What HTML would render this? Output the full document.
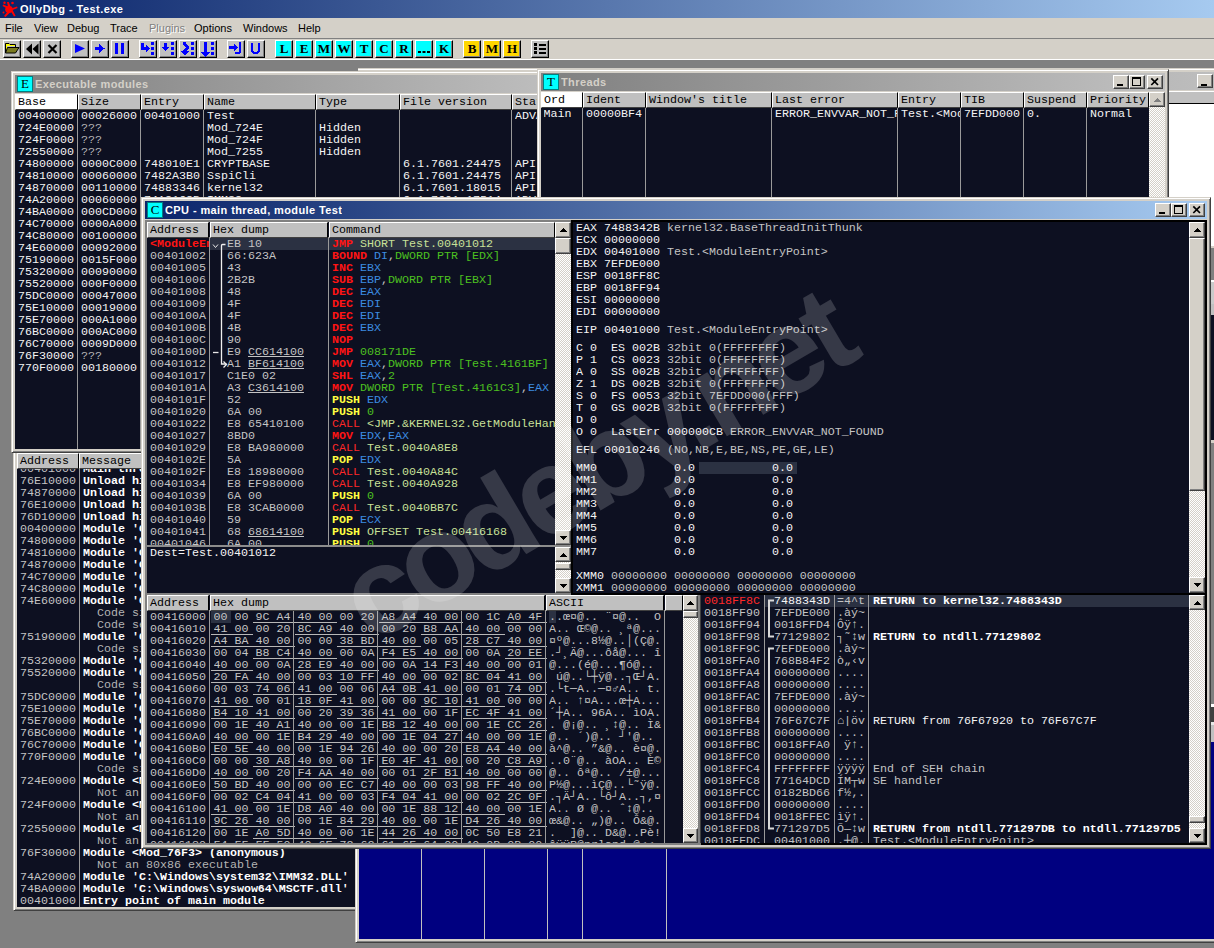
<!DOCTYPE html>
<html lang="en"><head><meta charset="utf-8"><title>OllyDbg - Test.exe</title>
<style>
html,body{margin:0;padding:0}
body{width:1214px;height:948px;overflow:hidden;background:#808080;position:relative;font-family:"Liberation Sans",sans-serif;font-size:11px}
div,pre,span,svg{position:absolute;box-sizing:border-box;margin:0;padding:0}
span.i,pre span{position:static}
pre,.m{font:11.67px/12px "Liberation Mono",monospace;white-space:pre;color:#c4c4c4;overflow:hidden}
.win{background:#d4d0c8;border:1px solid;border-color:#d4d0c8 #404040 #404040 #d4d0c8;box-shadow:inset 1px 1px 0 #fff,inset -1px -1px 0 #808080;overflow:hidden}
.cap{height:18px;color:#fff;font:bold 11px/18px "Liberation Sans",sans-serif;letter-spacing:.4px;white-space:nowrap;overflow:hidden}
.cap.on{background:linear-gradient(90deg,#0a246a,#a6caf0)}
.cap.off{background:linear-gradient(90deg,#808080,#c0c0c0);color:#d4d0c8}
.ico{width:16px;height:16px;background:#00ffff;border:1px solid #008080;color:#000;font:13px/14px "Liberation Serif",serif;text-align:center;letter-spacing:0}
.btn{background:#d4d0c8;border:1px solid;border-color:#fff #404040 #404040 #fff;box-shadow:inset -1px -1px 0 #808080,inset 1px 1px 0 #d4d0c8}
.hd{background:#c0c0c0;color:#000;height:16px;border-top:1px solid #fff;border-left:1px solid #fff;border-bottom:1px solid #404040;border-right:1px solid #000;font:11.67px/15px "Liberation Mono",monospace;white-space:pre;overflow:hidden;padding-left:2px}
.hd.hw{background:#fff}
.dk{background:#0d1021;overflow:hidden}
.vl{width:1px;background:#9a9a9a}
.trk{background-color:#e9e7e3;background-image:conic-gradient(#fff 25%,#d4d0c8 0 50%,#fff 0 75%,#d4d0c8 0);background-size:2px 2px}
.r{color:#ff1414;font-weight:bold}
.c{color:#ff2828}
.y{color:#ffff40;font-weight:bold}
.b{color:#3c8ce0}
.g{color:#4cc020}
.p{color:#c8e098}
.w{color:#f4f4f4}
.W{color:#fff;font-weight:bold}
.d{color:#b4b4b4}
.u{text-decoration:underline}
.menu span{position:absolute;top:0;line-height:20px;font-size:11px;color:#000}
</style></head>
<body>
<div class="win" style="left:13px;top:430px;width:500px;height:481px;"><div class="dk" style="left:3px;top:23px;width:480px;height:453px;"><pre style="left:3px;top:9px;width:60px;height:444px;">00401000
76E10000
74870000
76E10000
76D10000
00400000
74800000
74810000
74870000
74C70000
74C80000
74E60000


75190000

75320000
75520000

75DC0000
75E10000
75E70000
76BC0000
76C70000
770F0000

724E0000

724F0000

72550000

76F30000

74A20000
74BA0000
00401000</pre>
<pre style="left:66px;top:9px;width:420px;height:444px;"><span class="W">Main thread with ID 00000BF4 created</span>
<span class="W">Unload hidden module 76E10000</span>
<span class="W">Unload hidden module 74870000</span>
<span class="W">Unload hidden module 76E10000</span>
<span class="W">Unload hidden module 76D10000</span>
<span class="W">Module 'C:\Users\Test\Desktop\Test.exe'</span>
<span class="W">Module 'C:\Windows\syswow64\CRYPTBASE.dll'</span>
<span class="W">Module 'C:\Windows\syswow64\SspiCli.dll'</span>
<span class="W">Module 'C:\Windows\syswow64\kernel32.dll'</span>
<span class="W">Module 'C:\Windows\syswow64\LPK.dll'</span>
<span class="W">Module 'C:\Windows\syswow64\USER32.dll'</span>
<span class="W">Module 'C:\Windows\syswow64\OLEAUT32.dll'</span>
<span class="d">  Code size in header is 00080000, extending to size of section</span>
<span class="d">  Code section extended to include self-extractor</span>
<span class="W">Module 'C:\Windows\syswow64\ole32.dll'</span>
<span class="d">  Code size in header is 000F0000, extending to size of section</span>
<span class="W">Module 'C:\Windows\syswow64\GDI32.dll'</span>
<span class="W">Module 'C:\Windows\syswow64\RPCRT4.dll'</span>
<span class="d">  Code size in header is 000E0000, extending to size of section</span>
<span class="W">Module 'C:\Windows\syswow64\KERNELBASE.dll'</span>
<span class="W">Module 'C:\Windows\syswow64\sechost.dll'</span>
<span class="W">Module 'C:\Windows\syswow64\SHLWAPI.dll'</span>
<span class="W">Module 'C:\Windows\syswow64\msvcrt.dll'</span>
<span class="W">Module 'C:\Windows\syswow64\ADVAPI32.dll'</span>
<span class="W">Module 'C:\Windows\SysWOW64\ntdll.dll'</span>
<span class="d">  Code size in header is 00178000, extending to size of section</span>
<span class="W">Module &lt;Mod_724E&gt; (anonymous)</span>
<span class="d">  Not an 80x86 executable</span>
<span class="W">Module &lt;Mod_724F&gt; (anonymous)</span>
<span class="d">  Not an 80x86 executable</span>
<span class="W">Module &lt;Mod_7255&gt; (anonymous)</span>
<span class="d">  Not an 80x86 executable</span>
<span class="W">Module &lt;Mod_76F3&gt; (anonymous)</span>
<span class="d">  Not an 80x86 executable</span>
<span class="W">Module 'C:\Windows\system32\IMM32.DLL'</span>
<span class="W">Module 'C:\Windows\syswow64\MSCTF.dll'</span>
<span class="W">Entry point of main module</span></pre>
<div class="vl" style="left:62px;top:0px;width:1px;height:453px;"></div>
</div>
<div class="hd" style="left:3px;top:22px;width:62px;height:16px;">Address</div>
<div class="hd" style="left:65px;top:22px;width:420px;height:16px;">Message</div>
</div>
<div class="win" style="left:355px;top:68px;width:900px;height:875px;"><div class="cap off" style="left:3px;top:3px;width:892px;height:18px;"></div>
<div class="btn" style="left:841px;top:5px;width:16px;height:14px;"><svg width="14" height="12" style="left:0;top:0"><path d="M3 9h6v2H3z" fill="#000"/></svg></div>
<div style="left:3px;top:22px;width:892px;height:12px;background:#c0c0c0;border-top:1px solid #fff"></div>
<div style="left:3px;top:34px;width:892px;height:1px;background:#000"></div>
<div style="left:3px;top:35px;width:892px;height:142px;background:#fff"></div>
<div style="left:3px;top:177px;width:892px;height:2px;background:#d4d0c8"></div>
<div style="left:3px;top:179px;width:892px;height:32px;background:#808080"></div>
<div style="left:3px;top:211px;width:892px;height:2px;background:#fff"></div>
<div style="left:3px;top:213px;width:892px;height:22px;background:#cacaca"></div>
<div style="left:3px;top:235px;width:892px;height:11px;background:#c0c0c0"></div>
<div style="left:3px;top:246px;width:892px;height:125px;background:#0d1021"></div>
<div style="left:3px;top:371px;width:892px;height:3px;background:#d4d0c8"></div>
<div style="left:3px;top:374px;width:892px;height:261px;background:#808080"></div>
<div style="left:3px;top:635px;width:892px;height:3px;background:#fff"></div>
<div style="left:3px;top:638px;width:892px;height:15px;background:#404040"></div>
<div style="left:3px;top:653px;width:892px;height:3px;background:#e8e8e8"></div>
<div style="left:3px;top:656px;width:892px;height:17px;background:#c0c0c0"></div>
<div style="left:3px;top:673px;width:892px;height:197px;background:#000080"></div>
<div class="vl" style="left:65px;top:780px;width:1px;height:90px;background:#c0c0c0"></div>
<div class="vl" style="left:128px;top:780px;width:1px;height:90px;background:#c0c0c0"></div>
<div class="vl" style="left:191px;top:780px;width:1px;height:90px;background:#c0c0c0"></div>
<div class="vl" style="left:226px;top:780px;width:1px;height:90px;background:#c0c0c0"></div>
<div class="vl" style="left:310px;top:780px;width:1px;height:90px;background:#c0c0c0"></div>
</div>
<div style="left:355px;top:68px;width:3px;height:3px;background:#808080"></div>
<div class="win" style="left:11px;top:71px;width:560px;height:382px;"><div class="cap off" style="left:3px;top:3px;width:552px;height:18px;"></div>
<div class="ico" style="left:5px;top:4px;width:16px;height:16px;">E</div>
<div class="cap" style="left:23px;top:3px;height:18px;background:none;color:#d4d0c8;">Executable modules</div>
<div class="dk" style="left:3px;top:22px;width:552px;height:355px;"><pre style="left:3px;top:16px;width:59px;height:264px;"><span class="w">00400000</span>
<span class="w">724E0000</span>
<span class="w">724F0000</span>
<span class="w">72550000</span>
<span class="w">74800000</span>
<span class="w">74810000</span>
<span class="w">74870000</span>
<span class="w">74A20000</span>
<span class="w">74BA0000</span>
<span class="w">74C70000</span>
<span class="w">74C80000</span>
<span class="w">74E60000</span>
<span class="w">75190000</span>
<span class="w">75320000</span>
<span class="w">75520000</span>
<span class="w">75DC0000</span>
<span class="w">75E10000</span>
<span class="w">75E70000</span>
<span class="w">76BC0000</span>
<span class="w">76C70000</span>
<span class="w">76F30000</span>
<span class="w">770F0000</span></pre>
<pre style="left:66px;top:16px;width:59px;height:264px;"><span class="w">00026000</span>
<span class="d">???</span>
<span class="d">???</span>
<span class="d">???</span>
<span class="w">0000C000</span>
<span class="w">00060000</span>
<span class="w">00110000</span>
<span class="w">00060000</span>
<span class="w">000CD000</span>
<span class="w">0000A000</span>
<span class="w">00100000</span>
<span class="w">00092000</span>
<span class="w">0015F000</span>
<span class="w">00090000</span>
<span class="w">000F0000</span>
<span class="w">00047000</span>
<span class="w">00019000</span>
<span class="w">000A1000</span>
<span class="w">000AC000</span>
<span class="w">0009D000</span>
<span class="d">???</span>
<span class="w">00180000</span></pre>
<div class="vl" style="left:62px;top:15px;width:1px;height:340px;"></div>
<pre style="left:129px;top:16px;width:59px;height:264px;"><span class="w">00401000</span>
<span class="w"></span>
<span class="w"></span>
<span class="w"></span>
<span class="w">748010E1</span>
<span class="w">7482A3B0</span>
<span class="w">74883346</span>
<span class="w">74A2168B</span>
<span class="w"></span>
<span class="w"></span>
<span class="w"></span>
<span class="w"></span>
<span class="w"></span>
<span class="w"></span>
<span class="w"></span>
<span class="w"></span>
<span class="w"></span>
<span class="w"></span>
<span class="w"></span>
<span class="w"></span>
<span class="w"></span>
<span class="w"></span></pre>
<div class="vl" style="left:125px;top:15px;width:1px;height:340px;"></div>
<pre style="left:192px;top:16px;width:108px;height:264px;"><span class="w">Test</span>
<span class="w">Mod_724E</span>
<span class="w">Mod_724F</span>
<span class="w">Mod_7255</span>
<span class="w">CRYPTBASE</span>
<span class="w">SspiCli</span>
<span class="w">kernel32</span>
<span class="w">IMM32</span>
<span class="w"></span>
<span class="w"></span>
<span class="w"></span>
<span class="w"></span>
<span class="w"></span>
<span class="w"></span>
<span class="w"></span>
<span class="w"></span>
<span class="w"></span>
<span class="w"></span>
<span class="w"></span>
<span class="w"></span>
<span class="w"></span>
<span class="w"></span></pre>
<div class="vl" style="left:188px;top:15px;width:1px;height:340px;"></div>
<pre style="left:304px;top:16px;width:80px;height:264px;"><span class="w"></span>
<span class="w">Hidden</span>
<span class="w">Hidden</span>
<span class="w">Hidden</span>
<span class="w"></span>
<span class="w"></span>
<span class="w"></span>
<span class="w"></span>
<span class="w"></span>
<span class="w"></span>
<span class="w"></span>
<span class="w"></span>
<span class="w"></span>
<span class="w"></span>
<span class="w"></span>
<span class="w"></span>
<span class="w"></span>
<span class="w"></span>
<span class="w"></span>
<span class="w"></span>
<span class="w"></span>
<span class="w"></span></pre>
<div class="vl" style="left:300px;top:15px;width:1px;height:340px;"></div>
<pre style="left:388px;top:16px;width:108px;height:264px;"><span class="w"></span>
<span class="w"></span>
<span class="w"></span>
<span class="w"></span>
<span class="w">6.1.7601.24475</span>
<span class="w">6.1.7601.24475</span>
<span class="w">6.1.7601.18015</span>
<span class="w">6.1.7601.17514</span>
<span class="w"></span>
<span class="w"></span>
<span class="w"></span>
<span class="w"></span>
<span class="w"></span>
<span class="w"></span>
<span class="w"></span>
<span class="w"></span>
<span class="w"></span>
<span class="w"></span>
<span class="w"></span>
<span class="w"></span>
<span class="w"></span>
<span class="w"></span></pre>
<div class="vl" style="left:384px;top:15px;width:1px;height:340px;"></div>
<pre style="left:500px;top:16px;width:76px;height:264px;"><span class="w">ADVAPI32</span>
<span class="w"></span>
<span class="w"></span>
<span class="w"></span>
<span class="w">API-MS-Win</span>
<span class="w">API-MS-Win</span>
<span class="w">API-MS-Win</span>
<span class="w">ADVAPI32</span>
<span class="w"></span>
<span class="w"></span>
<span class="w"></span>
<span class="w"></span>
<span class="w"></span>
<span class="w"></span>
<span class="w"></span>
<span class="w"></span>
<span class="w"></span>
<span class="w"></span>
<span class="w"></span>
<span class="w"></span>
<span class="w"></span>
<span class="w"></span></pre>
<div class="vl" style="left:496px;top:15px;width:1px;height:340px;"></div>
</div>
<div class="hd hw" style="left:3px;top:22px;width:63px;height:16px;">Base</div>
<div class="hd" style="left:66px;top:22px;width:63px;height:16px;">Size</div>
<div class="hd" style="left:129px;top:22px;width:63px;height:16px;">Entry</div>
<div class="hd" style="left:192px;top:22px;width:112px;height:16px;">Name</div>
<div class="hd" style="left:304px;top:22px;width:84px;height:16px;">Type</div>
<div class="hd" style="left:388px;top:22px;width:112px;height:16px;">File version</div>
<div class="hd" style="left:500px;top:22px;width:80px;height:16px;">Static links</div>
</div>
<div class="win" style="left:537px;top:69px;width:632px;height:140px;"><div class="cap off" style="left:3px;top:3px;width:624px;height:18px;"></div>
<div class="ico" style="left:5px;top:4px;width:16px;height:16px;">T</div>
<div class="cap" style="left:23px;top:3px;height:18px;background:none;color:#d4d0c8;">Threads</div>
<div class="btn" style="left:575px;top:5px;width:16px;height:14px;"><svg width="14" height="12" style="left:0;top:0"><path shape-rendering="crispEdges" d="M3 8h6v2H3z" fill="#000"/></svg></div>
<div class="btn" style="left:591px;top:5px;width:16px;height:14px;"><svg width="14" height="12" style="left:0;top:0"><path shape-rendering="crispEdges" d="M2 1h9v9h-9z M3 3v6h7V3z" fill="#000" fill-rule="evenodd"/></svg></div>
<div class="btn" style="left:609px;top:5px;width:16px;height:14px;"><svg width="14" height="12" style="left:0;top:0"><path d="M3.300 2.300l6.700 6.700M10 2.300l-6.700 6.700" stroke="#000" stroke-width="1.700" fill="none"/></svg></div>
<div class="dk" style="left:3px;top:22px;width:624px;height:115px;"><pre style="left:2.5px;top:16px;width:38px;height:12px;"><span class="w">Main</span></pre>
<pre style="left:45px;top:16px;width:59px;height:12px;"><span class="w">00000BF4</span></pre>
<div class="vl" style="left:41px;top:15px;width:1px;height:100px;"></div>
<pre style="left:108px;top:16px;width:122px;height:12px;"><span class="w"></span></pre>
<div class="vl" style="left:104px;top:15px;width:1px;height:100px;"></div>
<pre style="left:234px;top:16px;width:122px;height:12px;"><span class="w">ERROR_ENVVAR_NOT_FOUND</span></pre>
<div class="vl" style="left:230px;top:15px;width:1px;height:100px;"></div>
<pre style="left:360px;top:16px;width:59px;height:12px;"><span class="w">Test.&lt;ModuleEntryPoint&gt;</span></pre>
<div class="vl" style="left:356px;top:15px;width:1px;height:100px;"></div>
<pre style="left:423px;top:16px;width:59px;height:12px;"><span class="w">7EFDD000</span></pre>
<div class="vl" style="left:419px;top:15px;width:1px;height:100px;"></div>
<pre style="left:486px;top:16px;width:59px;height:12px;"><span class="w">0.</span></pre>
<div class="vl" style="left:482px;top:15px;width:1px;height:100px;"></div>
<pre style="left:549px;top:16px;width:58px;height:12px;"><span class="w">Normal</span></pre>
<div class="vl" style="left:545px;top:15px;width:1px;height:100px;"></div>
</div>
<div class="hd hw" style="left:3px;top:22px;width:42px;height:16px;">Ord</div>
<div class="hd" style="left:45px;top:22px;width:63px;height:16px;">Ident</div>
<div class="hd" style="left:108px;top:22px;width:126px;height:16px;">Window's title</div>
<div class="hd" style="left:234px;top:22px;width:126px;height:16px;">Last error</div>
<div class="hd" style="left:360px;top:22px;width:63px;height:16px;">Entry</div>
<div class="hd" style="left:423px;top:22px;width:63px;height:16px;">TIB</div>
<div class="hd" style="left:486px;top:22px;width:63px;height:16px;">Suspend</div>
<div class="hd" style="left:549px;top:22px;width:62px;height:16px;">Priority</div>
<div class="trk" style="left:611px;top:22px;width:16px;height:110px;"></div>
<div class="btn" style="left:611px;top:22px;width:16px;height:15px;"><svg width="14" height="13" style="left:0;top:0"><path shape-rendering="crispEdges" d="M7 5h1v1h-1zM6 6h3v1h-3zM5 7h5v1h-5zM4 8h7v1h-7z" fill="#808080"/></svg></div>
</div>
<div class="win" style="left:141px;top:197px;width:1070px;height:652px;"><div class="cap on" style="left:3px;top:3px;width:1062px;height:18px;"></div>
<div class="ico" style="left:5px;top:4px;width:16px;height:16px;">C</div>
<div class="cap" style="left:23px;top:3px;height:18px;background:none;">CPU - main thread, module Test</div>
<div class="btn" style="left:1013px;top:5px;width:16px;height:14px;"><svg width="14" height="12" style="left:0;top:0"><path shape-rendering="crispEdges" d="M3 8h6v2H3z" fill="#000"/></svg></div>
<div class="btn" style="left:1029px;top:5px;width:16px;height:14px;"><svg width="14" height="12" style="left:0;top:0"><path shape-rendering="crispEdges" d="M2 1h9v9h-9z M3 3v6h7V3z" fill="#000" fill-rule="evenodd"/></svg></div>
<div class="btn" style="left:1047px;top:5px;width:16px;height:14px;"><svg width="14" height="12" style="left:0;top:0"><path d="M3.300 2.300l6.700 6.700M10 2.300l-6.700 6.700" stroke="#000" stroke-width="1.700" fill="none"/></svg></div>
<div style="left:3px;top:22px;width:1062px;height:625px;background:#000"></div>
<div style="left:3px;top:22px;width:426px;height:375px;background:#808080"></div>
<div style="left:3px;top:395px;width:556px;height:252px;background:#808080"></div>
<div class="dk" style="left:5px;top:24px;width:1058px;height:621px;"><div class="dk" style="left:0px;top:0px;width:408px;height:323px;"><div style="left:63px;top:16px;width:345px;height:12px;background:#2b3142"></div>
<pre style="left:3px;top:16px;width:59px;height:312px;"><span class="r">&lt;ModuleEntryPoint&gt;</span>
00401002
00401005
00401006
00401008
00401009
0040100A
0040100B
0040100C
0040100D
00401012
00401017
0040101A
0040101F
00401020
00401022
00401027
00401029
0040102E
0040102F
00401034
00401039
0040103B
00401040
00401041
00401046</pre>
<pre style="left:80px;top:16px;width:101px;height:312px;">EB 10
66:623A
43
2B2B
48
4F
4F
4B
90
E9 <span class="u">CC614100</span>
A1 <span class="u">BF614100</span>
C1E0 02
A3 <span class="u">C3614100</span>
52
6A 00
E8 65410100
8BD0
E8 BA980000
5A
E8 18980000
E8 EF980000
6A 00
E8 3CAB0000
59
68 <span class="u">68614100</span>
6A 00</pre>
<pre style="left:185px;top:16px;width:223px;height:312px;"><span class="r">JMP</span><span class="p"> SHORT Test.00401012</span>
<span class="r">BOUND</span><span class="b"> DI</span>,<span class="g">DWORD PTR [EDX]</span>
<span class="r">INC</span><span class="b"> EBX</span>
<span class="r">SUB</span><span class="b"> EBP</span>,<span class="g">DWORD PTR [EBX]</span>
<span class="r">DEC</span><span class="b"> EAX</span>
<span class="r">DEC</span><span class="b"> EDI</span>
<span class="r">DEC</span><span class="b"> EDI</span>
<span class="r">DEC</span><span class="b"> EBX</span>
<span class="r">NOP</span>
<span class="r">JMP</span><span class="g"> 008171DE</span>
<span class="r">MOV</span><span class="b"> EAX</span>,<span class="g">DWORD PTR [Test.4161BF]</span>
<span class="r">SHL</span><span class="b"> EAX</span>,<span class="g">2</span>
<span class="r">MOV</span><span class="g"> DWORD PTR [Test.4161C3]</span>,<span class="b">EAX</span>
<span class="y">PUSH</span><span class="b"> EDX</span>
<span class="y">PUSH</span><span class="g"> 0</span>
<span class="c">CALL</span><span class="p"> &lt;JMP.&amp;KERNEL32.GetModuleHandleA&gt;</span>
<span class="r">MOV</span><span class="b"> EDX</span>,<span class="b">EAX</span>
<span class="c">CALL</span><span class="p"> Test.0040A8E8</span>
<span class="y">POP</span><span class="b"> EDX</span>
<span class="c">CALL</span><span class="p"> Test.0040A84C</span>
<span class="c">CALL</span><span class="p"> Test.0040A928</span>
<span class="y">PUSH</span><span class="g"> 0</span>
<span class="c">CALL</span><span class="p"> Test.0040BB7C</span>
<span class="y">POP</span><span class="b"> ECX</span>
<span class="y">PUSH</span><span class="p"> OFFSET Test.00416168</span>
<span class="y">PUSH</span><span class="g"> 0</span></pre>
<div class="vl" style="left:62px;top:15px;width:1px;height:310px;"></div>
<div class="vl" style="left:181px;top:15px;width:1px;height:310px;"></div>
<div style="left:64px;top:16px;width:20px;height:140px;"><svg width="20" height="140" style="left:0;top:0"><path d="M2 6.500l2.500 3l2.500 -3" stroke="#e8e8e8" fill="none"/><path d="M14.500 6.500h-3a1 1 0 0 0 -1 1v118.500h5" stroke="#f0f0f0" stroke-width="1.300" fill="none"/><path d="M12.500 123.500l3 3l-3 3" stroke="#f0f0f0" stroke-width="1.300" fill="none"/><path d="M2 114.500h5.500" stroke="#e8e8e8" stroke-width="1.300"/></svg></div>
</div>
<div class="hd" style="left:0px;top:0px;width:62px;height:16px;">Address</div>
<div class="hd" style="left:63px;top:0px;width:118px;height:16px;">Hex dump</div>
<div class="hd" style="left:182px;top:0px;width:226px;height:16px;">Command</div>
<div class="trk" style="left:408px;top:0px;width:16px;height:323px;"></div>
<div class="btn" style="left:408px;top:0px;width:16px;height:16px;"><svg width="14" height="14" style="left:0;top:0"><path shape-rendering="crispEdges" d="M7 5h1v1h-1zM6 6h3v1h-3zM5 7h5v1h-5zM4 8h7v1h-7z" fill="#000"/></svg></div>
<div class="btn" style="left:408px;top:308px;width:16px;height:15px;"><svg width="14" height="13" style="left:0;top:0"><path shape-rendering="crispEdges" d="M4 5h7v1h-7zM5 6h5v1h-5zM6 7h3v1h-3zM7 8h1v1h-1z" fill="#000"/></svg></div>
<div class="btn" style="left:408px;top:16px;width:16px;height:16px;"></div>
<div style="left:0px;top:323px;width:424px;height:2px;background:#8c8c8c"></div>
<div class="dk" style="left:0px;top:325px;width:408px;height:46px;"><pre style="left:3px;top:0px;width:400px;height:12px;"><span class="w">Dest=Test.00401012</span></pre>
</div>
<div class="trk" style="left:408px;top:325px;width:16px;height:46px;"></div>
<div class="btn" style="left:408px;top:325px;width:16px;height:15px;"><svg width="14" height="13" style="left:0;top:0"><path shape-rendering="crispEdges" d="M7 5h1v1h-1zM6 6h3v1h-3zM5 7h5v1h-5zM4 8h7v1h-7z" fill="#000"/></svg></div>
<div class="btn" style="left:408px;top:356px;width:16px;height:15px;"><svg width="14" height="13" style="left:0;top:0"><path shape-rendering="crispEdges" d="M4 5h7v1h-7zM5 6h5v1h-5zM6 7h3v1h-3zM7 8h1v1h-1z" fill="#000"/></svg></div>
<div class="btn" style="left:408px;top:341px;width:16px;height:7px;"></div>
<div style="left:424px;top:0px;width:2px;height:373px;background:#000"></div>
<div class="dk" style="left:426px;top:0px;width:616px;height:371px;"><div style="left:126px;top:240px;width:98px;height:12px;background:#2b3142"></div>
<pre style="left:3px;top:0px;width:600px;height:12px;"><span class="w">EAX</span> <span class="w">7488342B</span> kernel32.BaseThreadInitThunk</pre>
<pre style="left:3px;top:12px;width:600px;height:12px;"><span class="w">ECX</span> <span class="w">00000000</span></pre>
<pre style="left:3px;top:24px;width:600px;height:12px;"><span class="w">EDX</span> <span class="w">00401000</span> Test.&lt;ModuleEntryPoint&gt;</pre>
<pre style="left:3px;top:36px;width:600px;height:12px;"><span class="w">EBX</span> <span class="w">7EFDE000</span></pre>
<pre style="left:3px;top:48px;width:600px;height:12px;"><span class="w">ESP</span> <span class="w">0018FF8C</span></pre>
<pre style="left:3px;top:60px;width:600px;height:12px;"><span class="w">EBP</span> <span class="w">0018FF94</span></pre>
<pre style="left:3px;top:72px;width:600px;height:12px;"><span class="w">ESI</span> <span class="w">00000000</span></pre>
<pre style="left:3px;top:84px;width:600px;height:12px;"><span class="w">EDI</span> <span class="w">00000000</span></pre>
<pre style="left:3px;top:102px;width:600px;height:12px;"><span class="w">EIP</span> <span class="w">00401000</span> Test.&lt;ModuleEntryPoint&gt;</pre>
<pre style="left:3px;top:120px;width:600px;height:12px;"><span class="w">C 0</span>  <span class="w">ES 002B</span> 32bit 0(FFFFFFFF)</pre>
<pre style="left:3px;top:132px;width:600px;height:12px;"><span class="w">P 1</span>  <span class="w">CS 0023</span> 32bit 0(FFFFFFFF)</pre>
<pre style="left:3px;top:144px;width:600px;height:12px;"><span class="w">A 0</span>  <span class="w">SS 002B</span> 32bit 0(FFFFFFFF)</pre>
<pre style="left:3px;top:156px;width:600px;height:12px;"><span class="w">Z 1</span>  <span class="w">DS 002B</span> 32bit 0(FFFFFFFF)</pre>
<pre style="left:3px;top:168px;width:600px;height:12px;"><span class="w">S 0</span>  <span class="w">FS 0053</span> 32bit 7EFDD000(FFF)</pre>
<pre style="left:3px;top:180px;width:600px;height:12px;"><span class="w">T 0</span>  <span class="w">GS 002B</span> 32bit 0(FFFFFFFF)</pre>
<pre style="left:3px;top:192px;width:600px;height:12px;"><span class="w">D 0</span></pre>
<pre style="left:3px;top:204px;width:600px;height:12px;"><span class="w">O 0</span>  <span class="w">LastErr 000000CB</span> ERROR_ENVVAR_NOT_FOUND</pre>
<pre style="left:3px;top:222px;width:600px;height:12px;"><span class="w">EFL</span> <span class="w">00010246</span> (NO,NB,E,BE,NS,PE,GE,LE)</pre>
<pre style="left:3px;top:240px;width:600px;height:12px;"><span class="w">MM0</span>           <span class="w">0.0</span>           <span class="w">0.0</span></pre>
<pre style="left:3px;top:252px;width:600px;height:12px;"><span class="w">MM1</span>           <span class="w">0.0</span>           <span class="w">0.0</span></pre>
<pre style="left:3px;top:264px;width:600px;height:12px;"><span class="w">MM2</span>           <span class="w">0.0</span>           <span class="w">0.0</span></pre>
<pre style="left:3px;top:276px;width:600px;height:12px;"><span class="w">MM3</span>           <span class="w">0.0</span>           <span class="w">0.0</span></pre>
<pre style="left:3px;top:288px;width:600px;height:12px;"><span class="w">MM4</span>           <span class="w">0.0</span>           <span class="w">0.0</span></pre>
<pre style="left:3px;top:300px;width:600px;height:12px;"><span class="w">MM5</span>           <span class="w">0.0</span>           <span class="w">0.0</span></pre>
<pre style="left:3px;top:312px;width:600px;height:12px;"><span class="w">MM6</span>           <span class="w">0.0</span>           <span class="w">0.0</span></pre>
<pre style="left:3px;top:324px;width:600px;height:12px;"><span class="w">MM7</span>           <span class="w">0.0</span>           <span class="w">0.0</span></pre>
<pre style="left:3px;top:348px;width:600px;height:12px;"><span class="w">XMM0</span> 00000000 00000000 00000000 00000000</pre>
<pre style="left:3px;top:360px;width:600px;height:12px;"><span class="w">XMM1</span> 00000000 00000000 00000000 00000000</pre>
</div>
<div class="trk" style="left:1042px;top:0px;width:16px;height:371px;"></div>
<div class="btn" style="left:1042px;top:0px;width:16px;height:16px;"><svg width="14" height="14" style="left:0;top:0"><path shape-rendering="crispEdges" d="M7 5h1v1h-1zM6 6h3v1h-3zM5 7h5v1h-5zM4 8h7v1h-7z" fill="#000"/></svg></div>
<div class="btn" style="left:1042px;top:355px;width:16px;height:16px;"><svg width="14" height="14" style="left:0;top:0"><path shape-rendering="crispEdges" d="M4 5h7v1h-7zM5 6h5v1h-5zM6 7h3v1h-3zM7 8h1v1h-1z" fill="#000"/></svg></div>
<div class="btn" style="left:1042px;top:16px;width:16px;height:253px;"></div>
<div style="left:0px;top:371px;width:424px;height:2px;background:#808080"></div>
<div style="left:424px;top:371px;width:634px;height:2px;background:#000"></div>
<div class="dk" style="left:0px;top:373px;width:536px;height:248px;"><div style="left:64px;top:16px;width:20px;height:12px;background:#2b3142"></div>
<div style="left:402px;top:16px;width:7px;height:12px;background:#2b3142"></div>
<div style="left:105.5px;top:27px;width:84px;height:1px;background:#b8b8b8"></div>
<div style="left:231.5px;top:27px;width:84px;height:1px;background:#b8b8b8"></div>
<div style="left:357.5px;top:27px;width:42px;height:1px;background:#b8b8b8"></div>
<div style="left:63.5px;top:39px;width:42px;height:1px;background:#b8b8b8"></div>
<div style="left:147.5px;top:39px;width:84px;height:1px;background:#b8b8b8"></div>
<div style="left:273.5px;top:39px;width:84px;height:1px;background:#b8b8b8"></div>
<div style="left:63.5px;top:51px;width:84px;height:1px;background:#b8b8b8"></div>
<div style="left:189.5px;top:51px;width:84px;height:1px;background:#b8b8b8"></div>
<div style="left:315.5px;top:51px;width:84px;height:1px;background:#b8b8b8"></div>
<div style="left:105.5px;top:63px;width:84px;height:1px;background:#b8b8b8"></div>
<div style="left:231.5px;top:63px;width:84px;height:1px;background:#b8b8b8"></div>
<div style="left:357.5px;top:63px;width:42px;height:1px;background:#b8b8b8"></div>
<div style="left:63.5px;top:75px;width:42px;height:1px;background:#b8b8b8"></div>
<div style="left:147.5px;top:75px;width:84px;height:1px;background:#b8b8b8"></div>
<div style="left:273.5px;top:75px;width:84px;height:1px;background:#b8b8b8"></div>
<div style="left:63.5px;top:87px;width:84px;height:1px;background:#b8b8b8"></div>
<div style="left:189.5px;top:87px;width:84px;height:1px;background:#b8b8b8"></div>
<div style="left:315.5px;top:87px;width:84px;height:1px;background:#b8b8b8"></div>
<div style="left:105.5px;top:99px;width:84px;height:1px;background:#b8b8b8"></div>
<div style="left:231.5px;top:99px;width:84px;height:1px;background:#b8b8b8"></div>
<div style="left:357.5px;top:99px;width:42px;height:1px;background:#b8b8b8"></div>
<div style="left:63.5px;top:111px;width:42px;height:1px;background:#b8b8b8"></div>
<div style="left:147.5px;top:111px;width:84px;height:1px;background:#b8b8b8"></div>
<div style="left:273.5px;top:111px;width:84px;height:1px;background:#b8b8b8"></div>
<div style="left:63.5px;top:123px;width:84px;height:1px;background:#b8b8b8"></div>
<div style="left:189.5px;top:123px;width:84px;height:1px;background:#b8b8b8"></div>
<div style="left:315.5px;top:123px;width:84px;height:1px;background:#b8b8b8"></div>
<div style="left:105.5px;top:135px;width:84px;height:1px;background:#b8b8b8"></div>
<div style="left:231.5px;top:135px;width:84px;height:1px;background:#b8b8b8"></div>
<div style="left:357.5px;top:135px;width:42px;height:1px;background:#b8b8b8"></div>
<div style="left:63.5px;top:147px;width:42px;height:1px;background:#b8b8b8"></div>
<div style="left:147.5px;top:147px;width:84px;height:1px;background:#b8b8b8"></div>
<div style="left:273.5px;top:147px;width:84px;height:1px;background:#b8b8b8"></div>
<div style="left:63.5px;top:159px;width:84px;height:1px;background:#b8b8b8"></div>
<div style="left:189.5px;top:159px;width:84px;height:1px;background:#b8b8b8"></div>
<div style="left:315.5px;top:159px;width:84px;height:1px;background:#b8b8b8"></div>
<div style="left:105.5px;top:171px;width:84px;height:1px;background:#b8b8b8"></div>
<div style="left:231.5px;top:171px;width:84px;height:1px;background:#b8b8b8"></div>
<div style="left:357.5px;top:171px;width:42px;height:1px;background:#b8b8b8"></div>
<div style="left:63.5px;top:183px;width:42px;height:1px;background:#b8b8b8"></div>
<div style="left:147.5px;top:183px;width:84px;height:1px;background:#b8b8b8"></div>
<div style="left:273.5px;top:183px;width:84px;height:1px;background:#b8b8b8"></div>
<div style="left:63.5px;top:195px;width:84px;height:1px;background:#b8b8b8"></div>
<div style="left:189.5px;top:195px;width:84px;height:1px;background:#b8b8b8"></div>
<div style="left:315.5px;top:195px;width:84px;height:1px;background:#b8b8b8"></div>
<div style="left:105.5px;top:207px;width:84px;height:1px;background:#b8b8b8"></div>
<div style="left:231.5px;top:207px;width:84px;height:1px;background:#b8b8b8"></div>
<div style="left:357.5px;top:207px;width:42px;height:1px;background:#b8b8b8"></div>
<div style="left:63.5px;top:219px;width:42px;height:1px;background:#b8b8b8"></div>
<div style="left:147.5px;top:219px;width:84px;height:1px;background:#b8b8b8"></div>
<div style="left:273.5px;top:219px;width:84px;height:1px;background:#b8b8b8"></div>
<div style="left:63.5px;top:231px;width:84px;height:1px;background:#b8b8b8"></div>
<div style="left:189.5px;top:231px;width:84px;height:1px;background:#b8b8b8"></div>
<div style="left:315.5px;top:231px;width:84px;height:1px;background:#b8b8b8"></div>
<div style="left:105.5px;top:243px;width:84px;height:1px;background:#b8b8b8"></div>
<div style="left:231.5px;top:243px;width:84px;height:1px;background:#b8b8b8"></div>
<pre style="left:3px;top:16px;width:59px;height:240px;">00416000
00416010
00416020
00416030
00416040
00416050
00416060
00416070
00416080
00416090
004160A0
004160B0
004160C0
004160D0
004160E0
004160F0
00416100
00416110
00416120
00416130</pre>
<pre style="left:66.5px;top:16px;width:331.5px;height:240px;">00 00 9C A4 40 00 00 20 A8 A4 40 00 00 1C A0 4F
41 00 00 20 8C A9 40 00 00 20 B8 AA 40 00 00 00
A4 BA 40 00 00 00 38 BD 40 00 00 05 28 C7 40 00
00 04 B8 C4 40 00 00 0A F4 E5 40 00 00 0A 20 EE
40 00 00 0A 28 E9 40 00 00 0A 14 F3 40 00 00 01
20 FA 40 00 00 03 10 FF 40 00 00 02 8C 04 41 00
00 03 74 06 41 00 00 06 A4 0B 41 00 00 01 74 0D
41 00 00 01 18 0F 41 00 00 00 9C 10 41 00 00 00
B4 10 41 00 00 20 39 36 41 00 00 1F EC 4F 41 00
00 1E 40 A1 40 00 00 1E B8 12 40 00 00 1E CC 26
40 00 00 1E B4 29 40 00 00 1E 04 27 40 00 00 1E
E0 5E 40 00 00 1E 94 26 40 00 00 20 E8 A4 40 00
00 00 30 A8 40 00 00 1F E0 4F 41 00 00 20 C8 A9
40 00 00 20 F4 AA 40 00 00 01 2F B1 40 00 00 00
50 BD 40 00 00 00 EC C7 40 00 00 03 98 FF 40 00
00 02 C4 04 41 00 00 03 F4 04 41 00 00 02 2C 0F
41 00 00 1E D8 A0 40 00 00 1E 88 12 40 00 00 1E
9C 26 40 00 00 1E 84 29 40 00 00 1E D4 26 40 00
00 1E A0 5D 40 00 00 1E 44 26 40 00 0C 50 E8 21
F4 FF FF 50 40 6E 72 6C 61 6E 64 00 40 0B 0B 00</pre>
<pre style="left:402px;top:16px;width:113px;height:240px;">..œ¤@.. ¨¤@..  O
A.. Œ©@.. ¸ª@...
¤º@...8½@..│(Ç@.
.┘¸Ä@...ôå@... î
@...(é@...¶ó@.. 
 ú@..└┼ÿ@..┐Œ┘A.
.└t─A..─¤♂A.. t.
A.. ↑¤A...œ┼A...
´┼A.. 96A.. ìOA.
. @¡@.. ¸↕@.. Ì&amp;
@.. ´)@.. ┘'@.. 
à^@.. ”&amp;@.. è¤@.
..0¨@.. àOA.. È©
@.. ôª@.. /±@...
P½@...ìÇ@..└˜ÿ@.
.┐Ä┘A..└ô┘A..┐,¤
A.. Ø @.. ˆ↕@.. 
œ&amp;@.. „)@.. Ô&amp;@.
.  ]@.. D&amp;@..Pè!
ôÿÿP@nrland.@♂♂.</pre>
<div class="vl" style="left:62px;top:15px;width:1px;height:240px;"></div>
<div class="vl" style="left:146px;top:15px;width:1px;height:240px;"></div>
<div class="vl" style="left:230px;top:15px;width:1px;height:240px;"></div>
<div class="vl" style="left:314px;top:15px;width:1px;height:240px;"></div>
<div class="vl" style="left:398px;top:15px;width:1px;height:240px;"></div>
<div class="vl" style="left:517px;top:15px;width:1px;height:240px;"></div>
</div>
<div class="hd" style="left:0px;top:373px;width:62px;height:16px;">Address</div>
<div class="hd" style="left:63px;top:373px;width:335px;height:16px;">Hex dump</div>
<div class="hd" style="left:399px;top:373px;width:118px;height:16px;">ASCII</div>
<div class="hd" style="left:518px;top:373px;width:18px;height:16px;"></div>
<div class="trk" style="left:536px;top:373px;width:15px;height:248px;"></div>
<div class="btn" style="left:536px;top:373px;width:15px;height:16px;"><svg width="13" height="14" style="left:0;top:0"><path shape-rendering="crispEdges" d="M6 5h1v1h-1zM5 6h3v1h-3zM4 7h5v1h-5zM3 8h7v1h-7z" fill="#000"/></svg></div>
<div class="btn" style="left:536px;top:606px;width:15px;height:15px;"><svg width="13" height="13" style="left:0;top:0"><path shape-rendering="crispEdges" d="M3 5h7v1h-7zM4 6h5v1h-5zM5 7h3v1h-3zM6 8h1v1h-1z" fill="#000"/></svg></div>
<div class="btn" style="left:536px;top:389px;width:15px;height:7px;"></div>
<div style="left:551px;top:373px;width:3px;height:248px;background:#808080;border-right:1px solid #404040"></div>
<div class="dk" style="left:554px;top:373px;width:488px;height:248px;"><div style="left:64px;top:0px;width:424px;height:12px;background:#2b3142"></div>
<pre style="left:3px;top:0px;width:59px;height:252px;font-weight:normal"><span class="c">0018FF8C</span>
0018FF90
0018FF94
0018FF98
0018FF9C
0018FFA0
0018FFA4
0018FFA8
0018FFAC
0018FFB0
0018FFB4
0018FFB8
0018FFBC
0018FFC0
0018FFC4
0018FFC8
0018FFCC
0018FFD0
0018FFD4
0018FFD8
0018FFDC</pre>
<pre style="left:73px;top:0px;width:59px;height:252px;"><span class="w">7488343D</span>
7EFDE000
0018FFD4
77129802
7EFDE000
768B84F2
00000000
00000000
7EFDE000
00000000
76F67C7F
00000000
0018FFA0
00000000
FFFFFFFF
77164DCD
0182BD66
00000000
0018FFEC
771297D5
00401000</pre>
<pre style="left:136px;top:0px;width:30px;height:252px;">=4^t
.àý~
Ôÿ↑.
┐˜↕w
.àý~
ò„‹v
....
....
.àý~
....
⌂|öv
....
 ÿ↑.
....
ÿÿÿÿ
ÍM┬w
f½‚.
....
ìÿ↑.
Õ—↕w
.┼@.</pre>
<pre style="left:172px;top:0px;width:316px;height:252px;"><span class="W">RETURN to kernel32.7488343D</span>


<span class="W">RETURN to ntdll.77129802</span>






<span class="w">RETURN from 76F67920 to 76F67C7F</span>



End of SEH chain
SE handler



<span class="W">RETURN from ntdll.771297DB to ntdll.771297D5</span>
Test.&lt;ModuleEntryPoint&gt;</pre>
<div class="vl" style="left:63px;top:0px;width:1px;height:248px;"></div>
<div class="vl" style="left:133px;top:0px;width:1px;height:248px;"></div>
<div class="vl" style="left:167px;top:0px;width:1px;height:248px;"></div>
<div style="left:66px;top:0px;width:8px;height:248px;"><svg width="8" height="248" style="left:0;top:0"><path d="M7 5.5 h-5 V41.5 h5" stroke="#d8d8d8" stroke-width="2" fill="none"/><path d="M7 53.5 h-5 V233.5 h5" stroke="#d8d8d8" stroke-width="2" fill="none"/></svg></div>
</div>
<div class="trk" style="left:1042px;top:373px;width:16px;height:248px;"></div>
<div class="btn" style="left:1042px;top:373px;width:16px;height:15px;"><svg width="14" height="13" style="left:0;top:0"><path shape-rendering="crispEdges" d="M7 5h1v1h-1zM6 6h3v1h-3zM5 7h5v1h-5zM4 8h7v1h-7z" fill="#000"/></svg></div>
<div class="btn" style="left:1042px;top:606px;width:16px;height:15px;"><svg width="14" height="13" style="left:0;top:0"><path shape-rendering="crispEdges" d="M4 5h7v1h-7zM5 6h5v1h-5zM6 7h3v1h-3zM7 8h1v1h-1z" fill="#000"/></svg></div>
<div class="btn" style="left:1042px;top:594px;width:16px;height:7px;"></div>
</div>
</div>
<div class="wm" style="left:594px;top:465px;font:bold 123px/123px 'Liberation Sans',sans-serif;letter-spacing:-7.5px;color:#fff;opacity:.17;transform:translate(-50%,-50%) rotate(-30.5deg);white-space:nowrap">codeby.net</div>
<div class="cap on" style="left:0px;top:0px;width:1214px;height:18px;"></div>
<div class="cap" style="left:20px;top:0px;height:18px;background:none;letter-spacing:.46px">OllyDbg - Test.exe</div>
<div style="left:2px;top:1px;width:16px;height:16px;"><svg width="16" height="16" viewBox="0 0 16 16" style="left:0;top:0"><g fill="#f00"><ellipse cx="7" cy="8.500" rx="3.800" ry="3.400"/><path d="M6 8L.5 5l.8 -1.500L8 6.500z M8 8l7 -2.500l.6 1.500L8 10z M7 9l-5 6l1.500 1L9.500 10z M8 9l4 6.500l1.600 -.8L10 8z M6.500 8L5 1h1.800L9 7z"/><circle cx="2.500" cy="1.800" r="1.200"/><circle cx="10.500" cy="2" r="1.300"/><circle cx="1.500" cy="11.500" r="1"/></g></svg></div>
<div style="left:0px;top:18px;width:1214px;height:42px;background:#d4d0c8"></div>
<div style="left:0px;top:38px;width:1214px;height:1px;background:#808080"></div>
<div style="left:0px;top:59px;width:1214px;height:1px;background:#fff"></div>
<div style="left:5px;top:18px;height:20px;font:11px/20px 'Liberation Sans',sans-serif;color:#000;white-space:nowrap">File</div>
<div style="left:34px;top:18px;height:20px;font:11px/20px 'Liberation Sans',sans-serif;color:#000;white-space:nowrap">View</div>
<div style="left:67px;top:18px;height:20px;font:11px/20px 'Liberation Sans',sans-serif;color:#000;white-space:nowrap">Debug</div>
<div style="left:110px;top:18px;height:20px;font:11px/20px 'Liberation Sans',sans-serif;color:#000;white-space:nowrap">Trace</div>
<div style="left:149px;top:18px;height:20px;font:11px/20px 'Liberation Sans',sans-serif;color:#808080;white-space:nowrap;text-shadow:1px 1px 0 #fff">Plugins</div>
<div style="left:194px;top:18px;height:20px;font:11px/20px 'Liberation Sans',sans-serif;color:#000;white-space:nowrap">Options</div>
<div style="left:243px;top:18px;height:20px;font:11px/20px 'Liberation Sans',sans-serif;color:#000;white-space:nowrap">Windows</div>
<div style="left:298px;top:18px;height:20px;font:11px/20px 'Liberation Sans',sans-serif;color:#000;white-space:nowrap">Help</div>
<div style="left:3px;top:40px;width:18px;height:18px;background:#c0c0c0;border:1px solid;border-color:#fff #000 #000 #fff;box-shadow:inset -1px -1px 0 #808080"><svg width="16" height="16" viewBox="0 0 16 16" style="left:0;top:0"><path shape-rendering="crispEdges" d="M1 2h4v1h6v2h-8v6h-2z" fill="#ffff00"/><path d="M3.500 6.500h11.500l-3.500 5.500h-10z" fill="#7a7a20"/><path d="M1.500 12V2.500h3.500l1 1h5.500v2.500M3.500 6.500h11.500l-3.500 5.500h-10z" fill="none" stroke="#000"/></svg></div>
<div style="left:23px;top:40px;width:18px;height:18px;background:#c0c0c0;border:1px solid;border-color:#fff #000 #000 #fff;box-shadow:inset -1px -1px 0 #808080"><svg width="16" height="16" viewBox="0 0 16 16" style="left:0;top:0"><path d="M8 2.500v11L2 8z M14.500 2.500v11L8.500 8z" fill="#000"/></svg></div>
<div style="left:43px;top:40px;width:18px;height:18px;background:#c0c0c0;border:1px solid;border-color:#fff #000 #000 #fff;box-shadow:inset -1px -1px 0 #808080"><svg width="16" height="16" viewBox="0 0 16 16" style="left:0;top:0"><path d="M4.500 4l8 8M12.500 4l-8 8" stroke="#000" stroke-width="2.200"/></svg></div>
<div style="left:71px;top:40px;width:18px;height:18px;background:#c0c0c0;border:1px solid;border-color:#fff #000 #000 #fff;box-shadow:inset -1px -1px 0 #808080"><svg width="16" height="16" viewBox="0 0 16 16" style="left:0;top:0"><path d="M3 3l10 4.500l-10 4.500z" fill="#0000ff"/></svg></div>
<div style="left:91px;top:40px;width:18px;height:18px;background:#c0c0c0;border:1px solid;border-color:#fff #000 #000 #fff;box-shadow:inset -1px -1px 0 #808080"><svg width="16" height="16" viewBox="0 0 16 16" style="left:0;top:0"><path shape-rendering="crispEdges" d="M7 3h1v1h-1zM7 4h2v1h-2zM7 5h3v1h-3zM3 6h8v1h-8zM3 7h10v1h-10zM3 8h8v1h-8zM7 9h3v1h-3zM7 10h2v1h-2zM7 11h1v1h-1z" fill="#0000ff"/></svg></div>
<div style="left:111px;top:40px;width:18px;height:18px;background:#c0c0c0;border:1px solid;border-color:#fff #000 #000 #fff;box-shadow:inset -1px -1px 0 #808080"><svg width="16" height="16" viewBox="0 0 16 16" style="left:0;top:0"><path shape-rendering="crispEdges" d="M3 2h3v11H3z M9 2h3v11H9z" fill="#0000ff"/></svg></div>
<div style="left:139px;top:40px;width:18px;height:18px;background:#c0c0c0;border:1px solid;border-color:#fff #000 #000 #fff;box-shadow:inset -1px -1px 0 #808080"><svg width="16" height="16" viewBox="0 0 16 16" style="left:0;top:0"><path shape-rendering="crispEdges" d="M11 1h3v1h-3zM1 2h3v1h-3zM11 2h3v1h-3zM1 3h3v1h-3zM11 3h3v1h-3zM1 4h3v1h-3zM6 4h1v1h-1zM1 5h3v1h-3zM6 5h2v1h-2zM1 6h8v1h-8zM11 6h3v1h-3zM1 7h9v1h-9zM11 7h3v1h-3zM1 8h8v1h-8zM11 8h3v1h-3zM6 9h2v1h-2zM6 10h1v1h-1zM11 11h3v1h-3zM11 12h3v1h-3zM11 13h3v1h-3z" fill="#0000ff"/></svg></div>
<div style="left:159px;top:40px;width:18px;height:18px;background:#c0c0c0;border:1px solid;border-color:#fff #000 #000 #fff;box-shadow:inset -1px -1px 0 #808080"><svg width="16" height="16" viewBox="0 0 16 16" style="left:0;top:0"><path shape-rendering="crispEdges" d="M11 1h3v1h-3zM4 2h3v1h-3zM11 2h3v1h-3zM4 3h3v1h-3zM11 3h3v1h-3zM4 4h3v1h-3zM4 5h3v1h-3zM2 6h7v1h-7zM11 6h3v1h-3zM3 7h5v1h-5zM11 7h3v1h-3zM4 8h3v1h-3zM11 8h3v1h-3zM5 9h1v1h-1zM11 11h3v1h-3zM11 12h3v1h-3zM11 13h3v1h-3z" fill="#0000ff"/></svg></div>
<div style="left:179px;top:40px;width:18px;height:18px;background:#c0c0c0;border:1px solid;border-color:#fff #000 #000 #fff;box-shadow:inset -1px -1px 0 #808080"><svg width="16" height="16" viewBox="0 0 16 16" style="left:0;top:0"><path shape-rendering="crispEdges" d="M3 1h3v1h-3zM11 1h3v1h-3zM3 2h3v1h-3zM11 2h3v1h-3zM3 3h4v1h-4zM11 3h3v1h-3zM4 4h4v1h-4zM5 5h4v1h-4zM6 6h3v1h-3zM11 6h3v1h-3zM5 7h4v1h-4zM11 7h3v1h-3zM4 8h4v1h-4zM11 8h3v1h-3zM3 9h4v1h-4zM1 10h8v1h-8zM2 11h6v1h-6zM11 11h3v1h-3zM3 12h4v1h-4zM11 12h3v1h-3zM4 13h2v1h-2zM11 13h3v1h-3z" fill="#0000ff"/></svg></div>
<div style="left:199px;top:40px;width:18px;height:18px;background:#c0c0c0;border:1px solid;border-color:#fff #000 #000 #fff;box-shadow:inset -1px -1px 0 #808080"><svg width="16" height="16" viewBox="0 0 16 16" style="left:0;top:0"><path shape-rendering="crispEdges" d="M4 1h3v1h-3zM11 1h3v1h-3zM4 2h3v1h-3zM11 2h3v1h-3zM4 3h3v1h-3zM11 3h3v1h-3zM4 4h3v1h-3zM4 5h3v1h-3zM4 6h3v1h-3zM11 6h3v1h-3zM4 7h3v1h-3zM11 7h3v1h-3zM4 8h3v1h-3zM11 8h3v1h-3zM4 9h3v1h-3zM4 10h3v1h-3zM1 11h9v1h-9zM11 11h3v1h-3zM2 12h7v1h-7zM11 12h3v1h-3zM3 13h5v1h-5zM11 13h3v1h-3zM4 14h3v1h-3zM5 15h1v1h-1z" fill="#0000ff"/></svg></div>
<div style="left:227px;top:40px;width:18px;height:18px;background:#c0c0c0;border:1px solid;border-color:#fff #000 #000 #fff;box-shadow:inset -1px -1px 0 #808080"><svg width="16" height="16" viewBox="0 0 16 16" style="left:0;top:0"><path shape-rendering="crispEdges" d="M11 1h2v1h-2zM11 2h2v1h-2zM6 3h1v1h-1zM11 3h2v1h-2zM6 4h2v1h-2zM11 4h2v1h-2zM1 5h8v1h-8zM11 5h2v1h-2zM1 6h9v1h-9zM11 6h2v1h-2zM1 7h8v1h-8zM11 7h2v1h-2zM6 8h2v1h-2zM11 8h2v1h-2zM6 9h1v1h-1zM11 9h2v1h-2zM11 10h2v1h-2zM7 11h6v1h-6zM7 12h5v1h-5z" fill="#0000ff"/></svg></div>
<div style="left:247px;top:40px;width:18px;height:18px;background:#c0c0c0;border:1px solid;border-color:#fff #000 #000 #fff;box-shadow:inset -1px -1px 0 #808080"><svg width="16" height="16" viewBox="0 0 16 16" style="left:0;top:0"><path shape-rendering="crispEdges" d="M3 2h2v1h-2zM10 2h2v1h-2zM3 3h2v1h-2zM10 3h2v1h-2zM3 4h2v1h-2zM10 4h2v1h-2zM3 5h2v1h-2zM10 5h2v1h-2zM3 6h2v1h-2zM10 6h2v1h-2zM3 7h2v1h-2zM10 7h2v1h-2zM3 8h2v1h-2zM10 8h2v1h-2zM3 9h2v1h-2zM10 9h2v1h-2zM3 10h3v1h-3zM9 10h3v1h-3zM4 11h7v1h-7zM5 12h5v1h-5z" fill="#0000ff"/></svg></div>
<div style="left:275px;top:40px;width:18px;height:18px;background:#00ffff;border:1px solid;border-color:#fff #000 #000 #fff;box-shadow:inset -1px -1px 0 #808080"><span class="i" style="display:block;width:16px;text-align:center;font:bold 13px/16px 'Liberation Serif',serif;color:#000">L</span></div>
<div style="left:295px;top:40px;width:18px;height:18px;background:#00ffff;border:1px solid;border-color:#fff #000 #000 #fff;box-shadow:inset -1px -1px 0 #808080"><span class="i" style="display:block;width:16px;text-align:center;font:bold 13px/16px 'Liberation Serif',serif;color:#000">E</span></div>
<div style="left:315px;top:40px;width:18px;height:18px;background:#00ffff;border:1px solid;border-color:#fff #000 #000 #fff;box-shadow:inset -1px -1px 0 #808080"><span class="i" style="display:block;width:16px;text-align:center;font:bold 13px/16px 'Liberation Serif',serif;color:#000">M</span></div>
<div style="left:335px;top:40px;width:18px;height:18px;background:#00ffff;border:1px solid;border-color:#fff #000 #000 #fff;box-shadow:inset -1px -1px 0 #808080"><span class="i" style="display:block;width:16px;text-align:center;font:bold 13px/16px 'Liberation Serif',serif;color:#000">W</span></div>
<div style="left:355px;top:40px;width:18px;height:18px;background:#00ffff;border:1px solid;border-color:#fff #000 #000 #fff;box-shadow:inset -1px -1px 0 #808080"><span class="i" style="display:block;width:16px;text-align:center;font:bold 13px/16px 'Liberation Serif',serif;color:#000">T</span></div>
<div style="left:375px;top:40px;width:18px;height:18px;background:#00ffff;border:1px solid;border-color:#fff #000 #000 #fff;box-shadow:inset -1px -1px 0 #808080"><span class="i" style="display:block;width:16px;text-align:center;font:bold 13px/16px 'Liberation Serif',serif;color:#000">C</span></div>
<div style="left:395px;top:40px;width:18px;height:18px;background:#00ffff;border:1px solid;border-color:#fff #000 #000 #fff;box-shadow:inset -1px -1px 0 #808080"><span class="i" style="display:block;width:16px;text-align:center;font:bold 13px/16px 'Liberation Serif',serif;color:#000">R</span></div>
<div style="left:415px;top:40px;width:18px;height:18px;background:#00ffff;border:1px solid;border-color:#fff #000 #000 #fff;box-shadow:inset -1px -1px 0 #808080"><svg width="16" height="16" viewBox="0 0 16 16" style="left:0;top:0"><path d="M2 10h3v2H2z M6.500 10h3v2h-3z M11 10h3v2h-3z" fill="#000"/></svg></div>
<div style="left:435px;top:40px;width:18px;height:18px;background:#00ffff;border:1px solid;border-color:#fff #000 #000 #fff;box-shadow:inset -1px -1px 0 #808080"><span class="i" style="display:block;width:16px;text-align:center;font:bold 13px/16px 'Liberation Serif',serif;color:#000">K</span></div>
<div style="left:463px;top:40px;width:18px;height:18px;background:#ffd700;border:1px solid;border-color:#fff #000 #000 #fff;box-shadow:inset -1px -1px 0 #808080"><span class="i" style="display:block;width:16px;text-align:center;font:bold 13px/16px 'Liberation Serif',serif;color:#000">B</span></div>
<div style="left:483px;top:40px;width:18px;height:18px;background:#ffd700;border:1px solid;border-color:#fff #000 #000 #fff;box-shadow:inset -1px -1px 0 #808080"><span class="i" style="display:block;width:16px;text-align:center;font:bold 13px/16px 'Liberation Serif',serif;color:#000">M</span></div>
<div style="left:503px;top:40px;width:18px;height:18px;background:#ffd700;border:1px solid;border-color:#fff #000 #000 #fff;box-shadow:inset -1px -1px 0 #808080"><span class="i" style="display:block;width:16px;text-align:center;font:bold 13px/16px 'Liberation Serif',serif;color:#000">H</span></div>
<div style="left:531px;top:40px;width:18px;height:18px;background:#c0c0c0;border:1px solid;border-color:#fff #000 #000 #fff;box-shadow:inset -1px -1px 0 #808080"><svg width="16" height="16" viewBox="0 0 16 16" style="left:0;top:0"><path shape-rendering="crispEdges" d="M2 2h3v3H2z M2 6h3v3H2z M2 10h3v3H2z M7 3h7v2H7z M7 7h7v2H7z M7 11h7v2H7z" fill="#000"/></svg></div>
</body></html>
